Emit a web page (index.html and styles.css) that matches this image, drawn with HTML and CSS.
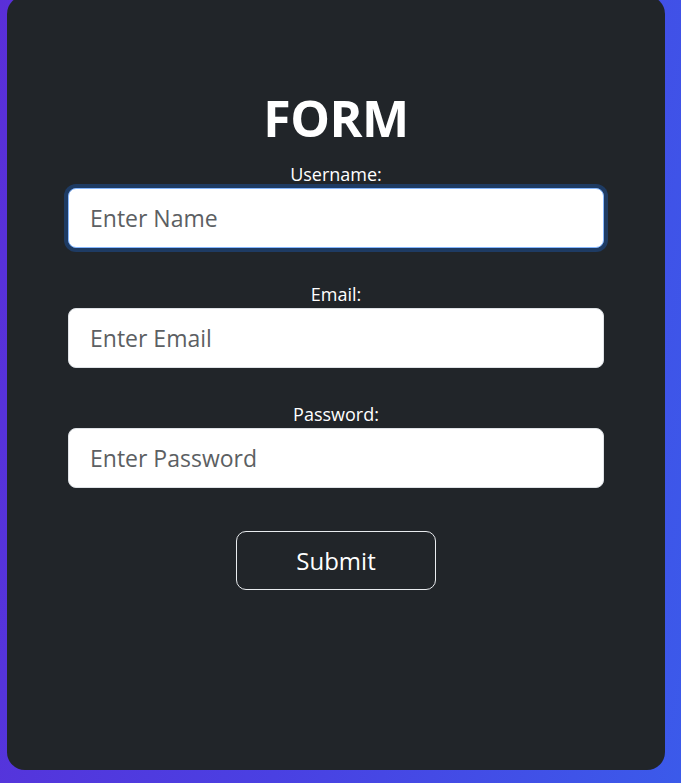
FILE: index.html
```html
<!DOCTYPE html>
<html lang="en">
<head>
<meta charset="utf-8">
<title>Form</title>
<link rel="stylesheet" href="styles.css">
</head>
<body>
<main class="card">
  <h1 class="title">FORM</h1>
  <form class="form">
    <div class="group">
      <label class="label" for="username">Username:</label>
      <input class="field field-focus" id="username" type="text" placeholder="Enter Name" autofocus>
    </div>
    <div class="group">
      <label class="label" for="email">Email:</label>
      <input class="field" id="email" type="email" placeholder="Enter Email">
    </div>
    <div class="group">
      <label class="label" for="password">Password:</label>
      <input class="field" id="password" type="password" placeholder="Enter Password">
    </div>
    <button class="submit" type="button">Submit</button>
  </form>
</main>
</body>
</html>
```
FILE: styles.css
```css
html, body {
  margin: 0;
  padding: 0;
  height: 100%;
  overflow: hidden;
}
body {
  background: linear-gradient(100deg, #5a2fd8 0%, #4a40e2 50%, #3b5aea 100%);
  font-family: "Open Sans", "Noto Sans", sans-serif;
  color: #fff;
}
.card {
  box-sizing: border-box;
  width: 658px;
  height: 774px;
  margin: -4px 0 0 7px;
  background: #212529;
  border-radius: 18px;
  display: flex;
  flex-direction: column;
  align-items: center;
  padding-top: 92px;
}
.title {
  margin: 0;
  font-size: 50px;
  font-weight: 700;
  line-height: 60px;
  letter-spacing: -0.5px;
}
.form {
  width: 536px;
  display: flex;
  flex-direction: column;
  align-items: center;
  margin-top: 15px;
}
.group {
  width: 100%;
  display: flex;
  flex-direction: column;
  align-items: center;
  margin-bottom: 35px;
}
.label {
  font-size: 18px;
  line-height: 22px;
  margin-bottom: 3px;
}
.field {
  box-sizing: border-box;
  width: 100%;
  height: 60px;
  border: 1px solid #dee2e6;
  border-radius: 8px;
  background: #fff;
  padding: 0 21px;
  font-family: inherit;
  font-size: 23px;
  color: #212529;
  outline: none;
}
.field::placeholder {
  color: #5c5f63;
}
.field-focus {
  border-color: #86b7fe;
  box-shadow: 0 0 0 4px #1e3b63;
}
.submit {
  box-sizing: border-box;
  width: 200px;
  height: 59px;
  margin-top: 8px;
  background: transparent;
  border: 1px solid #e9ecef;
  border-radius: 10px;
  color: #fff;
  font-family: inherit;
  font-size: 24px;
  cursor: pointer;
}
```
